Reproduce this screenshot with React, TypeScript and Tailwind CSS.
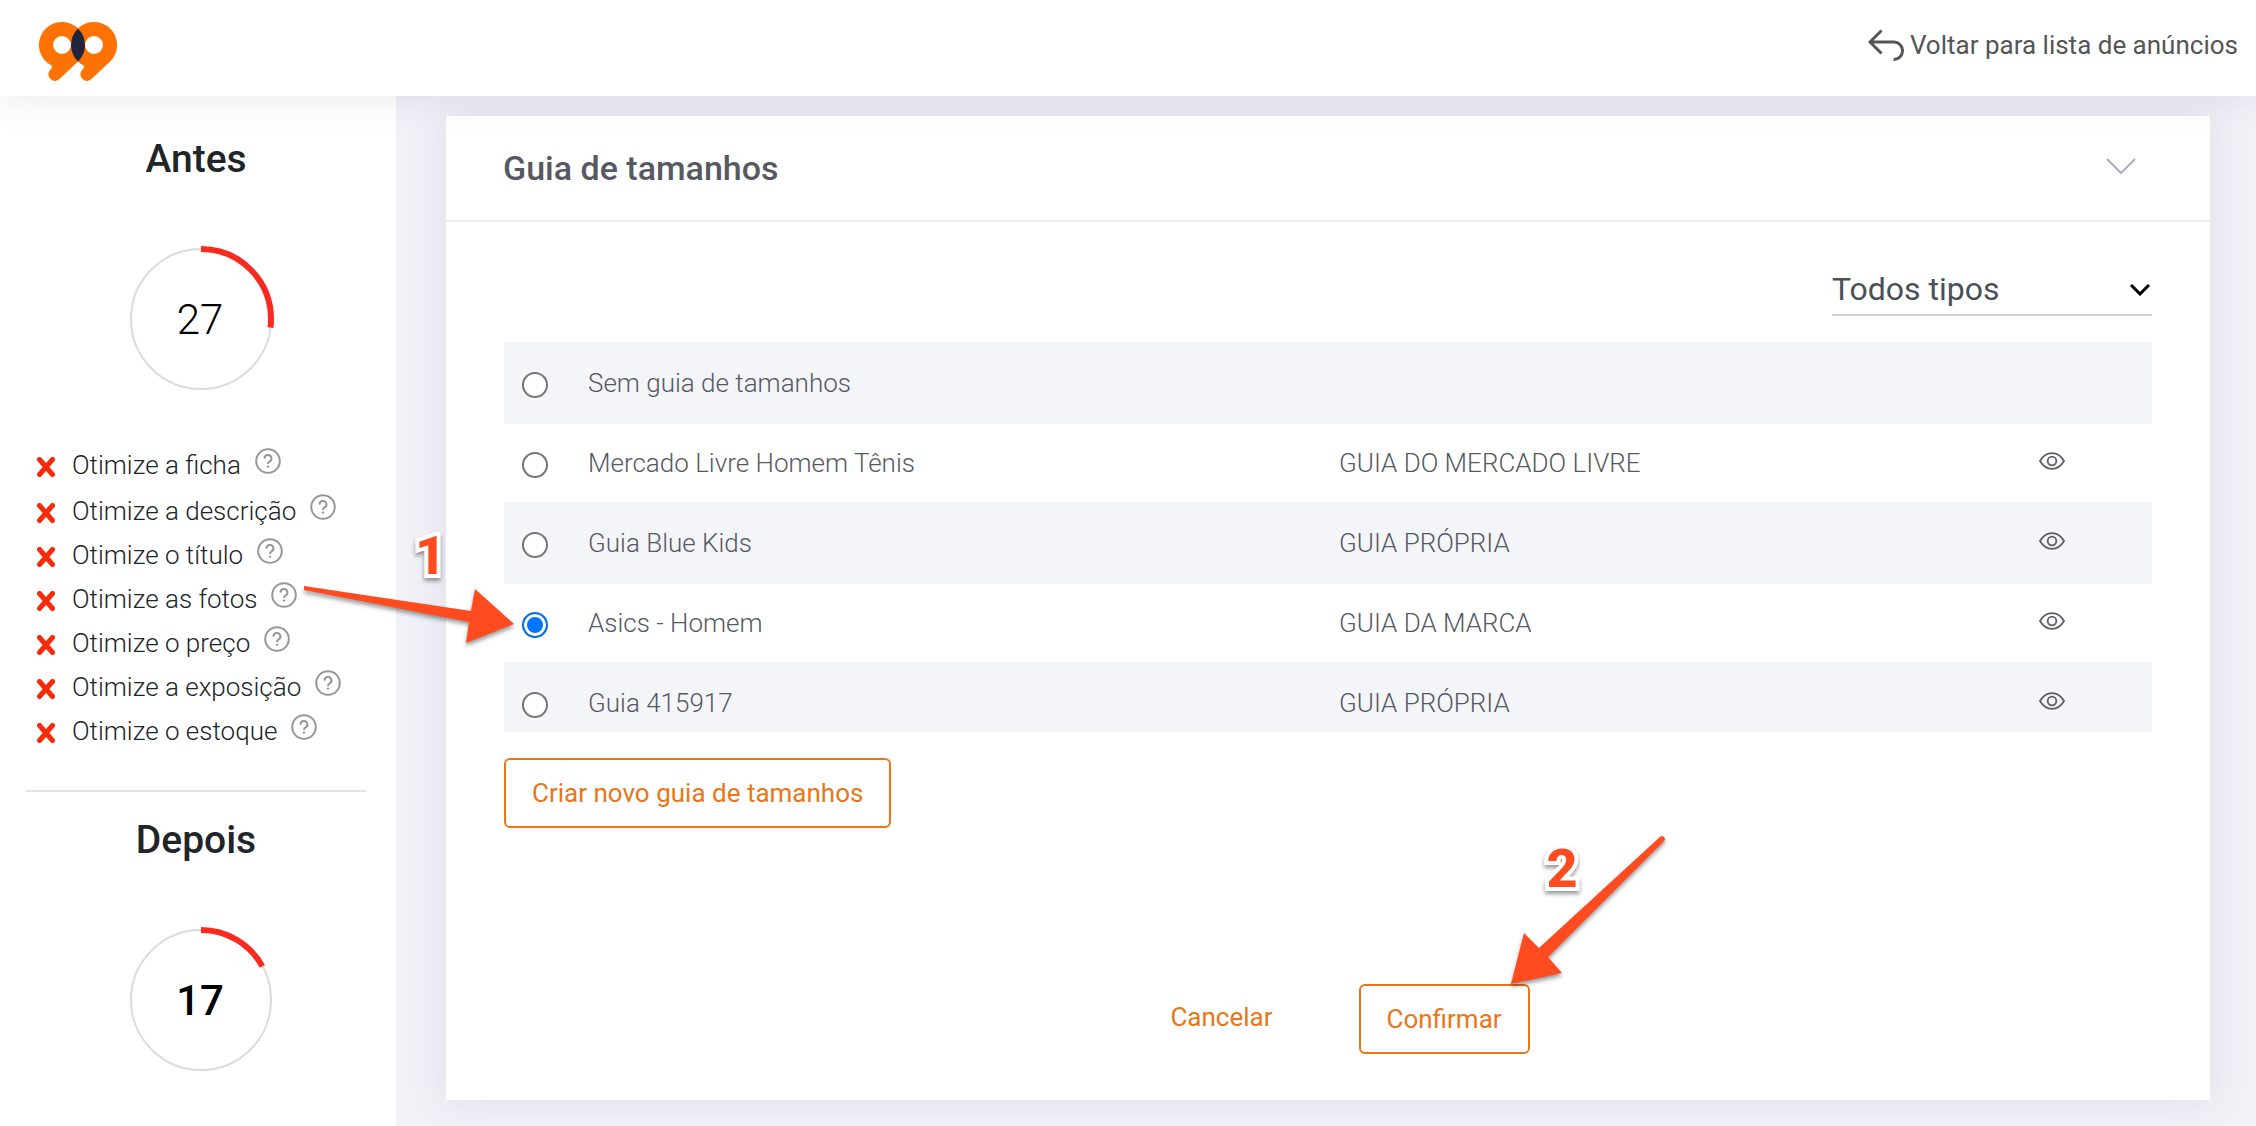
import { useState } from "react";

const TIPS = [
  "Otimize a ficha",
  "Otimize a descrição",
  "Otimize o título",
  "Otimize as fotos",
  "Otimize o preço",
  "Otimize a exposição",
  "Otimize o estoque",
];

const GUIDES = [
  { id: "none", name: "Sem guia de tamanhos", type: "" },
  { id: "ml", name: "Mercado Livre Homem Tênis", type: "GUIA DO MERCADO LIVRE" },
  { id: "blue", name: "Guia Blue Kids", type: "GUIA PRÓPRIA" },
  { id: "asics", name: "Asics - Homem", type: "GUIA DA MARCA" },
  { id: "415917", name: "Guia 415917", type: "GUIA PRÓPRIA" },
];

function Logo() {
  return (
    <svg width="78" height="59" viewBox="0 0 78 59" className="block" aria-hidden="true">
      <path
        fill="#ff7100"
        fillRule="evenodd"
        d="M23 0A23 23 0 0 0 10 42l2 1q2 2 0 4l-1 1A6.5 6.5 0 0 0 21 56.6L39.3 39.3A23 23 0 0 0 23 0ZM23 14a9 9 0 1 1 0 18a9 9 0 1 1 0-18Z"
      />
      <path
        fill="#ff7100"
        fillRule="evenodd"
        d="M55 0A23 23 0 0 0 42 42l2 1q2 2 0 4l-1 1A6.5 6.5 0 0 0 53 56.6L71.3 39.3A23 23 0 0 0 55 0ZM55 14a9 9 0 1 1 0 18a9 9 0 1 1 0-18Z"
      />
      <path fill="#20253c" d="M39 6.5A23 23 0 0 1 39 39.5A23 23 0 0 1 39 6.5Z" />
    </svg>
  );
}

function BackIcon() {
  return (
    <svg width="36" height="32" viewBox="0 0 36 32" fill="none" stroke="#555" strokeWidth="3" aria-hidden="true">
      <path d="M13.5 1.5L2 13L13.5 24.5M2 13H26A8.7 8.7 0 0 1 25.5 30.5" />
    </svg>
  );
}

function CrossIcon() {
  return (
    <svg width="18" height="20" viewBox="0 0 18 20" stroke="#f52c0c" strokeWidth="5" strokeLinecap="round" aria-hidden="true">
      <path d="M2.5 2.5L15.5 17.5M15.5 2.5L2.5 17.5" />
    </svg>
  );
}

function HelpIcon() {
  return (
    <svg width="26" height="26" viewBox="0 0 26 26" fill="none" stroke="#9a9696" strokeWidth="2" aria-hidden="true">
      <circle cx="13" cy="13" r="11.8" />
      <path d="M9.6 10.6A3.4 3.4 0 1 1 14.6 13.4Q13 14.3 13 16" />
      <circle cx="13" cy="18.6" r="1.2" fill="#9a9696" stroke="none" />
    </svg>
  );
}

function EyeIcon() {
  return (
    <svg width="26" height="18" viewBox="0 0 26 18" fill="none" stroke="#5c5d66" strokeWidth="1.8" aria-hidden="true">
      <path d="M1 9C4 4 8 1.2 13 1.2S22 4 25 9C22 14 18 16.8 13 16.8S4 14 1 9Z" />
      <circle cx="13" cy="9" r="4.3" />
    </svg>
  );
}

function ScoreRing({ value, weight }: { value: number; weight: string }) {
  return (
    <div className="relative ml-[10px] size-[148px]">
      <svg viewBox="0 0 148 148" fill="none" className="size-full -rotate-90" aria-hidden="true">
        <circle cx="74" cy="74" r="70" stroke="#dcdcdc" strokeWidth="2" />
        <circle cx="74" cy="74" r="70" stroke="#fb2a20" strokeWidth="6" pathLength="100" strokeDasharray={`${value} 100`} />
      </svg>
      <span className={`absolute inset-0 flex items-center justify-center pt-0.5 pr-0.5 text-[42px] text-black ${weight}`}>
        {value}
      </span>
    </div>
  );
}

export default function App() {
  const [selected, setSelected] = useState("asics");

  return (
    <div className="flex min-h-screen flex-col bg-[#f1f2f8] font-[Roboto,sans-serif] text-[26px] leading-8">
      <header className="relative z-10 flex h-24 items-center justify-between bg-white pr-[18px] pl-[39px] shadow-[0_0_40px_rgba(60,60,80,0.12)]">
        <a href="#inicio" aria-label="Início" className="pt-[6px]">
          <Logo />
        </a>
        <a href="#anuncios" className="flex items-center gap-1.5 pb-1.5 text-[#555]">
          <BackIcon />
          Voltar para lista de anúncios
        </a>
      </header>

      <div className="flex flex-1">
        <aside className="flex w-[396px] shrink-0 flex-col items-center bg-white pt-[39px] pr-[30px] pl-[26px]">
          <h2 className="text-[39px] leading-12 font-medium text-[#212529]">Antes</h2>
          <div className="mt-[62px]">
            <ScoreRing value={27} weight="font-light" />
          </div>

          <ul className="mt-[50px] w-full pl-[11px] font-light text-[#212529]">
            {TIPS.map((tip) => (
              <li key={tip} className="flex h-11 items-center first:mb-0.5">
                <span className="mt-1">
                  <CrossIcon />
                </span>
                <span className="ml-[17px]">{tip}</span>
                <button type="button" aria-label={`Ajuda: ${tip}`} className="mb-2 ml-[14px]">
                  <HelpIcon />
                </button>
              </li>
            ))}
          </ul>

          <hr className="mt-[37px] w-full border-t-2 border-[#e5e5e5]" />

          <h2 className="mt-6 text-[39px] leading-12 font-medium text-[#212529]">Depois</h2>
          <div className="mt-[62px]">
            <ScoreRing value={17} weight="font-medium" />
          </div>
        </aside>

        <main className="min-w-0 flex-1 pt-5 pr-[46px] pb-[26px] pl-[50px]">
          <section className="relative flex h-full flex-col bg-white shadow-[0_0_40px_rgba(60,60,90,0.10)]">
            <div className="flex h-[106px] items-center justify-between border-b-2 border-[#ebedf0] pr-[74px] pl-[57px]">
              <h1 className="text-[34px] leading-10 font-medium text-[#575962]">Guia de tamanhos</h1>
              <button type="button" aria-label="Recolher" className="pb-[3px]">
                <svg width="30" height="17" viewBox="0 0 30 17" fill="none" stroke="#afadc6" strokeWidth="2" aria-hidden="true">
                  <path d="M1 1L15 15L29 1" />
                </svg>
              </button>
            </div>

            <div className="flex flex-1 flex-col px-[58px] pt-[42px] pb-[46px]">
              <div className="relative w-80 self-end">
                <select
                  aria-label="Tipo de guia"
                  className="h-[52px] w-full appearance-none border-b-2 border-[#ced0d8] bg-transparent text-[32px] leading-10 text-[#495057] outline-none"
                >
                  <option>Todos tipos</option>
                </select>
                <svg
                  className="pointer-events-none absolute top-5 right-0.5"
                  width="20"
                  height="12"
                  viewBox="0 0 20 12"
                  fill="none"
                  stroke="#000"
                  strokeWidth="3"
                  aria-hidden="true"
                >
                  <path d="M1 1L10 10L19 1" />
                </svg>
              </div>

              <div className="mt-[26px] h-[390px] overflow-y-auto [scrollbar-width:none]">
                <table className="w-full table-fixed border-separate border-spacing-0 text-left font-light text-[#575962]">
                  <colgroup>
                    <col className="w-[84px]" />
                    <col />
                    <col className="w-[613px]" />
                    <col className="w-[200px]" />
                  </colgroup>
                  <tbody>
                    {GUIDES.map((guide) => (
                      <tr key={guide.id} className="h-20 odd:bg-[#f4f5f9] [&>td]:border-t-2 [&>td]:border-[#f4f5f9]">
                        <td className="pt-1 pl-[18px]">
                          <input
                            type="radio"
                            name="guide"
                            id={`guide-${guide.id}`}
                            checked={selected === guide.id}
                            onChange={() => setSelected(guide.id)}
                            className="block size-[26px] appearance-none rounded-full border-2 border-[#767676] bg-white checked:border-[#0a6fe8] checked:bg-[#0075ff] checked:shadow-[inset_0_0_0_3px_#fff]"
                          />
                        </td>
                        <td>
                          <label htmlFor={`guide-${guide.id}`}>{guide.name}</label>
                        </td>
                        <td>{guide.type}</td>
                        <td>
                          {guide.type && (
                            <button type="button" aria-label={`Ver ${guide.name}`} className="mx-auto mb-1 block">
                              <EyeIcon />
                            </button>
                          )}
                        </td>
                      </tr>
                    ))}
                  </tbody>
                </table>
              </div>

              <button
                type="button"
                className="mt-[26px] h-[70px] self-start rounded-md border-2 border-[#ea7618] px-[26px] text-[#ea7618]"
              >
                Criar novo guia de tamanhos
              </button>

              <div className="mt-auto flex items-center justify-center gap-[86px] pl-[44px] text-[#ea7618]">
                <button type="button" className="pb-1">
                  Cancelar
                </button>
                <div className="relative">
                  <button type="button" className="h-[70px] rounded-md border-2 border-[#ea7618] px-[26px]">
                    Confirmar
                  </button>
                  {/* step 2 marker */}
                  <svg
                    className="pointer-events-none absolute right-[-140px] bottom-[66px] drop-shadow-[0_3px_2px_rgba(0,0,0,0.4)]"
                    width="160"
                    height="160"
                    viewBox="1510 828 160 160"
                    fill="#ff4b1f"
                    aria-hidden="true"
                  >
                    <path d="M1661 836Q1665 836 1665 840L1548 957L1562 973L1511 984L1524 933L1539 948Z" />
                  </svg>
                  <span className="absolute right-[-48px] bottom-[153px] text-[54px] leading-[64px] font-extrabold text-[#ff4b1f] drop-shadow-[0_3px_2px_rgba(0,0,0,0.4)] [-webkit-text-stroke:8px_white] [paint-order:stroke]">
                    2
                  </span>
                </div>
              </div>
            </div>

            {/* step 1 marker */}
            <svg
              className="pointer-events-none absolute top-[464px] left-[-146px] drop-shadow-[0_3px_2px_rgba(0,0,0,0.4)]"
              width="220"
              height="70"
              viewBox="300 580 220 70"
              fill="#ff4b1f"
              aria-hidden="true"
            >
              <path d="M304 586L471 611L475 589L514 624L466 643L469 622L304 590Z" />
            </svg>
            <span className="absolute top-[408px] left-[-31px] text-[54px] leading-[64px] font-extrabold text-[#ff4b1f] drop-shadow-[0_3px_2px_rgba(0,0,0,0.4)] [-webkit-text-stroke:8px_white] [paint-order:stroke]">
              1
            </span>
          </section>
        </main>
      </div>
    </div>
  );
}
